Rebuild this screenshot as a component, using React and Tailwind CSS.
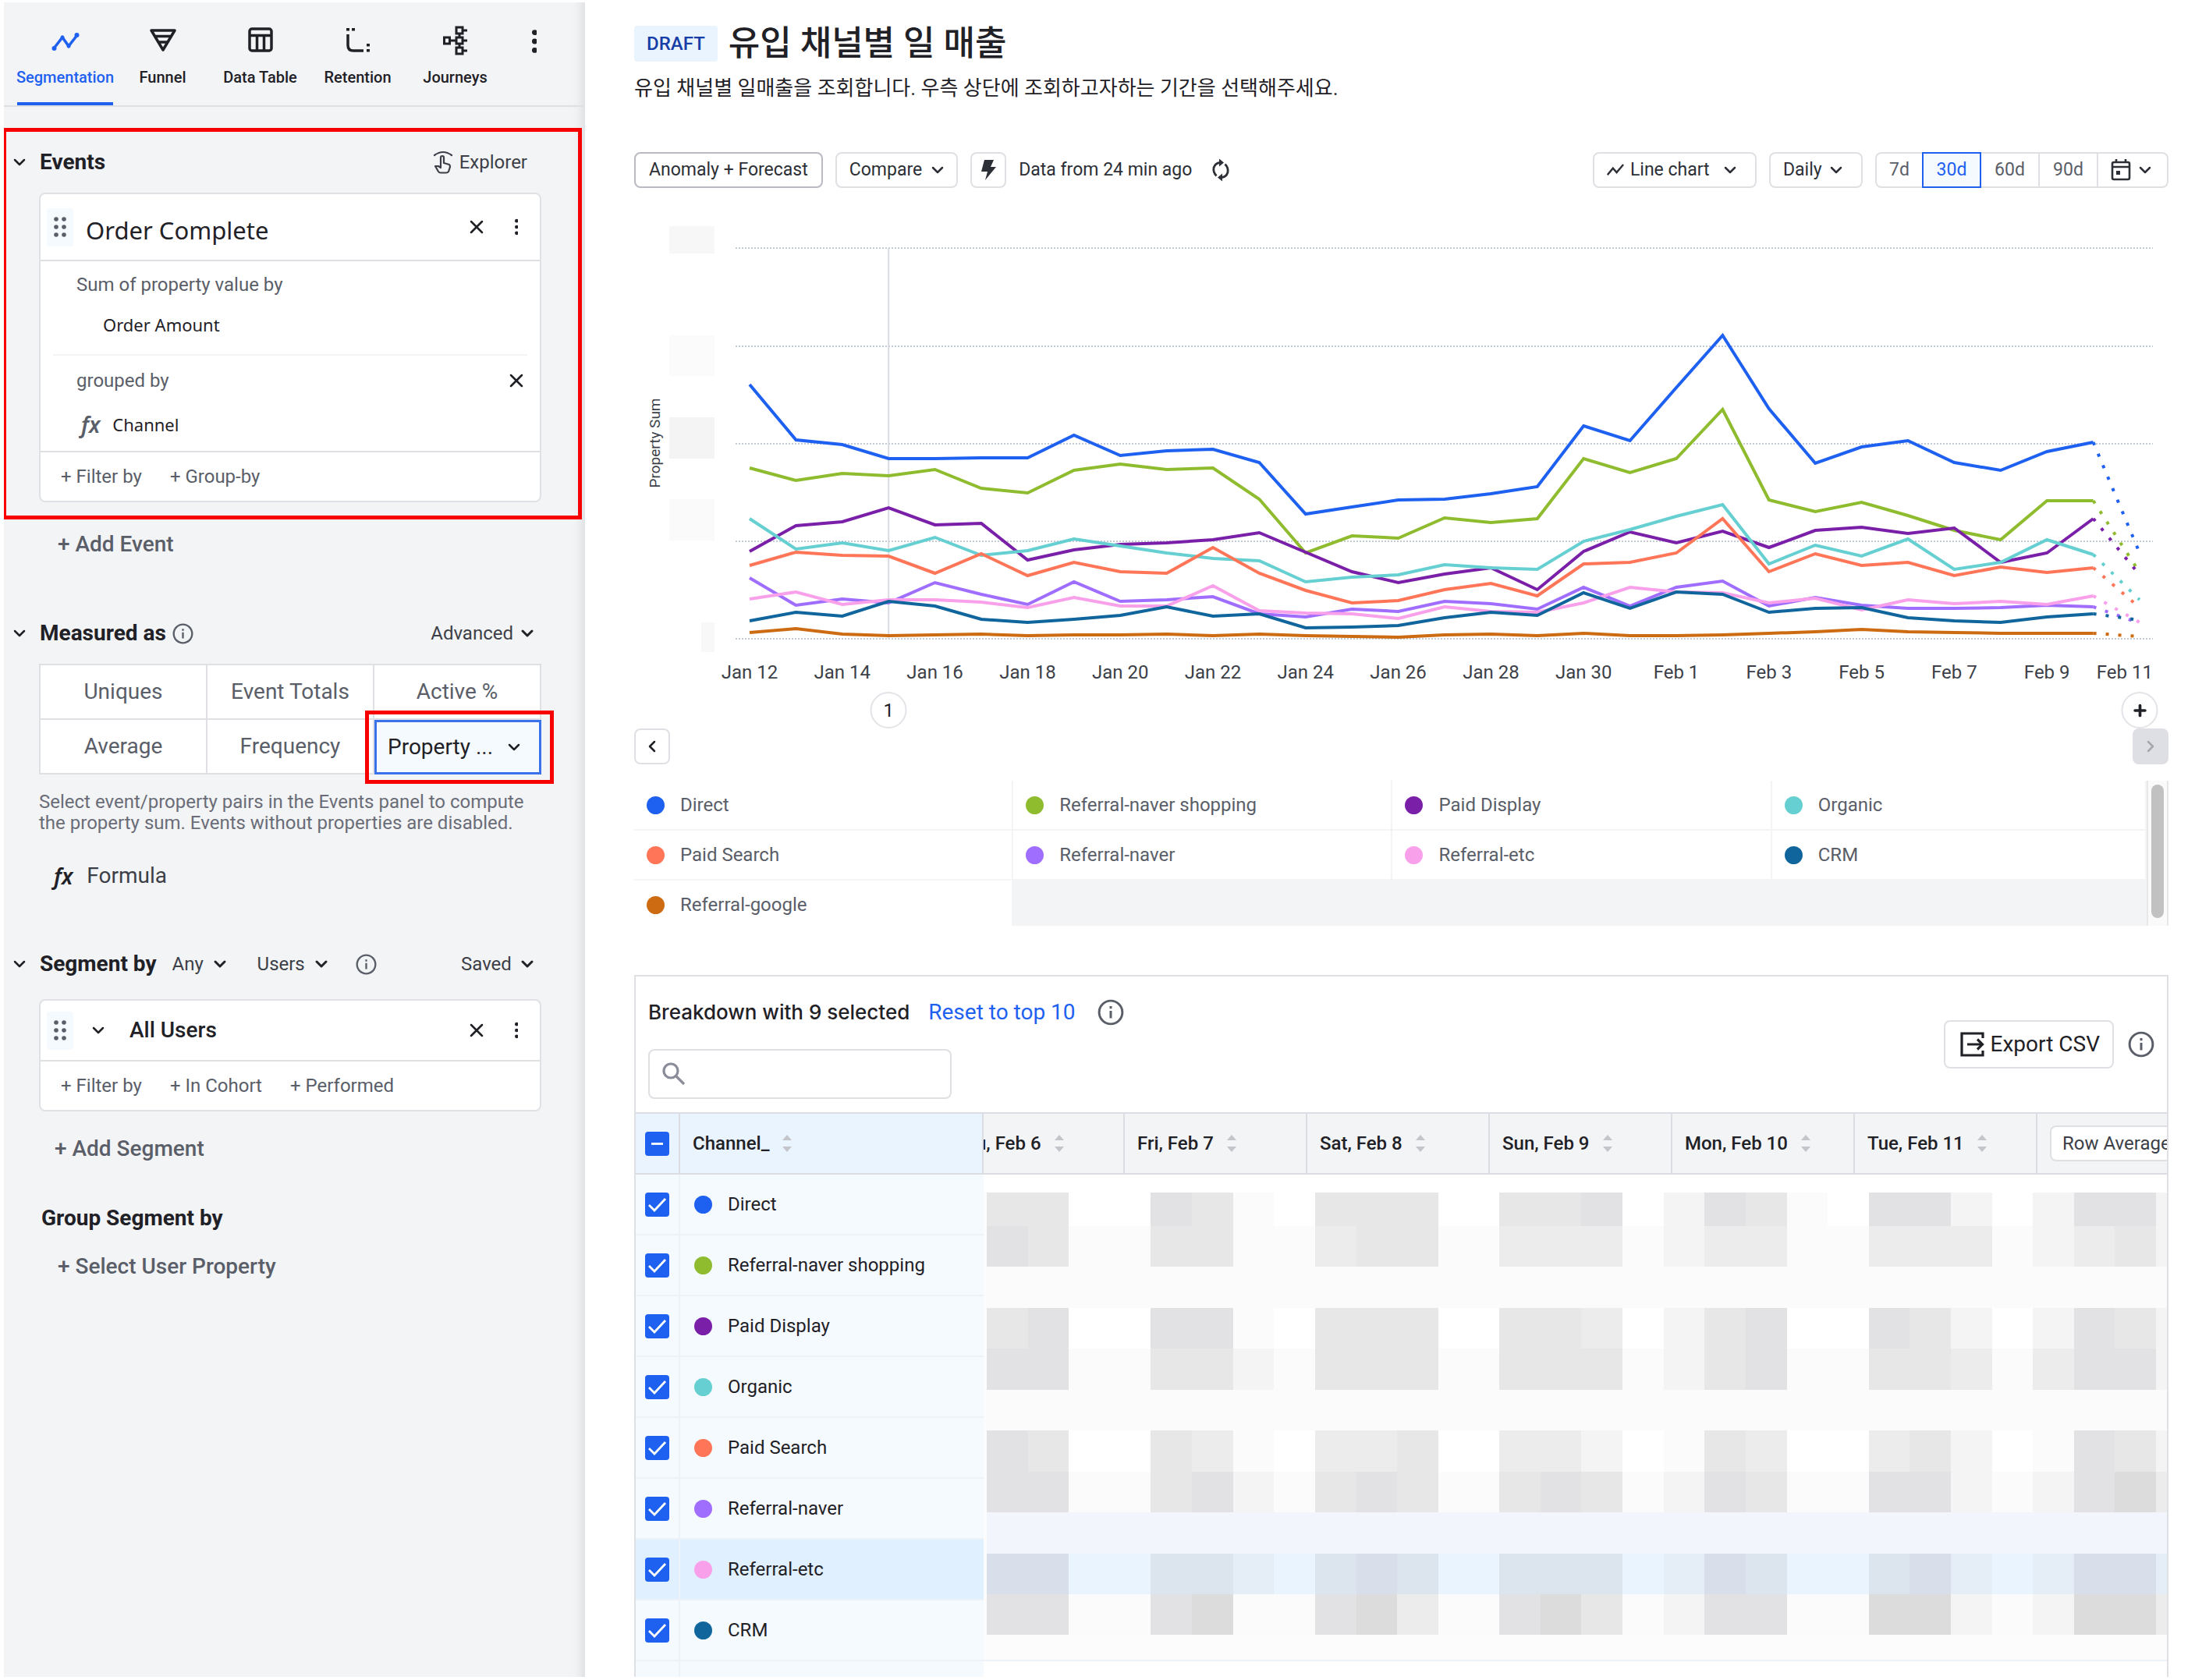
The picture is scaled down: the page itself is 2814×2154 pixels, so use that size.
import { ChevronDown, ChevronLeft, ChevronRight, X, Plus } from 'lucide-react';

const series = [
  { name: 'Direct', color: '#1e61f0', values: [326, 255, 249, 231, 231, 232, 232, 261, 235, 241, 243, 226, 160, 169, 178, 179, 186, 195, 273, 254, 322, 389, 295, 225, 246, 254, 226, 216, 240, 252, 110] },
  { name: 'Referral-naver shopping', color: '#8fbc2f', values: [219, 203, 212, 209, 217, 193, 187, 216, 224, 217, 219, 179, 110, 132, 129, 155, 149, 154, 231, 213, 231, 294, 178, 163, 175, 158, 139, 127, 177, 177, 85] },
  { name: 'Paid Display', color: '#7a1fa8', values: [112, 145, 150, 168, 146, 148, 101, 114, 121, 123, 127, 136, 111, 86, 72, 83, 91, 63, 112, 137, 123, 138, 117, 139, 143, 135, 142, 98, 110, 154, 82] },
  { name: 'Organic', color: '#66cfd1', values: [154, 115, 123, 113, 130, 107, 113, 128, 119, 110, 103, 100, 73, 79, 82, 95, 91, 89, 125, 140, 157, 172, 96, 120, 106, 128, 89, 98, 127, 108, 50] },
  { name: 'Paid Search', color: '#ff7557', values: [94, 111, 107, 106, 84, 109, 81, 98, 86, 84, 117, 84, 62, 46, 49, 63, 71, 55, 96, 98, 110, 154, 86, 109, 94, 98, 81, 92, 85, 91, 40] },
  { name: 'Referral-naver', color: '#a06eff', values: [78, 43, 51, 46, 72, 57, 44, 73, 48, 50, 54, 32, 28, 38, 35, 48, 45, 38, 66, 42, 66, 74, 42, 53, 43, 39, 39, 40, 43, 41, 20] },
  { name: 'Referral-etc', color: '#f9a0ea', values: [51, 60, 44, 50, 50, 47, 40, 53, 42, 42, 68, 36, 33, 32, 26, 41, 35, 34, 46, 66, 60, 59, 46, 52, 37, 50, 45, 48, 44, 55, 21] },
  { name: 'CRM', color: '#10659c', values: [23, 34, 29, 48, 42, 25, 21, 25, 30, 41, 29, 32, 14, 15, 17, 27, 34, 30, 59, 39, 60, 57, 34, 39, 40, 27, 23, 21, 28, 32, 24] },
  { name: 'Referral-google', color: '#cc6b12', values: [8, 13, 6, 4, 5, 6, 4, 5, 5, 6, 4, 6, 4, 3, 2, 5, 6, 4, 7, 4, 4, 5, 7, 9, 12, 9, 8, 7, 7, 7, 3] },
];

const dates = ['Jan 12', 'Jan 14', 'Jan 16', 'Jan 18', 'Jan 20', 'Jan 22', 'Jan 24', 'Jan 26', 'Jan 28', 'Jan 30', 'Feb 1', 'Feb 3', 'Feb 5', 'Feb 7', 'Feb 9'];

const columns = ['Fri, Feb 7', 'Sat, Feb 8', 'Sun, Feb 9', 'Mon, Feb 10', 'Tue, Feb 11'];

// Masked values: one letter per block, see maskColors
const maskRows = [
  'ee..feb.eee.eef.cfeb.ffc.cffc',
  'febbeebbdeebdddbcddbbdddbcdec',
  'bbbbbbbbbbbbbbbbbbbbbbbbbbbbb',
  'ef..ffb.eee.eed.cef..fec.cfec',
  'ffbbeecbeeebeeebcefbbeedbdffc',
  'bbbbbbbbbbbbbbbbbbbbbbbbbbbbb',
  'fe..edb.dde.ddc.bed..dec.bfec',
  'ffbbefcbefebefebcfebbffcbcfgd',
  'lllllllllllllllllllllllllllll',
  'kkhhjjihjkjhjjjhikjhhjkihikki',
  'ffbbfgbbfgdbfgebcffbbggcbcggd',
];

const maskColors = {
  '.': 'bg-white',
  b: 'bg-[#fbfbfb]',
  c: 'bg-[#f4f4f5]',
  d: 'bg-[#ececed]',
  e: 'bg-[#e7e7e8]',
  f: 'bg-[#e2e2e4]',
  g: 'bg-[#dcdcdd]',
  h: 'bg-[#e9f4fe]',
  i: 'bg-[#e5edf7]',
  j: 'bg-[#dce4ee]',
  k: 'bg-[#d8dfea]',
  l: 'bg-[#f2f6fc]',
};

const CHART_W = 1967;
const BASE = 530;
const dayX = (i) => 148 + i * 59.4;

function SegmentationIcon() {
  return (
    <svg viewBox="0 0 36 36" className="size-9" fill="none" stroke="currentColor" strokeWidth="3.5">
      <path d="M3 29 L14 15 L22 26 L33 12" />
      <g fill="currentColor" stroke="none">
        <circle cx="3.5" cy="29" r="3" /><circle cx="14" cy="15" r="2.500" />
        <circle cx="22" cy="26" r="2.500" /><circle cx="32.5" cy="12" r="3" />
      </g>
    </svg>
  );
}

function FunnelIcon() {
  return (
    <svg viewBox="0 0 36 36" className="size-9" fill="none" stroke="currentColor" strokeWidth="3.5">
      <path d="M3 6 H33 L18 31 Z M7 13.5 H29 M11 21 H25" strokeLinejoin="round" />
    </svg>
  );
}

function TableIcon() {
  return (
    <svg viewBox="0 0 36 36" className="size-9" fill="none" stroke="currentColor" strokeWidth="3.5">
      <rect x="4" y="4" width="28" height="28" rx="3" />
      <path d="M4 12.500 H32 M13.5 12.500 V32 M22.5 12.500 V32" />
    </svg>
  );
}

function RetentionIcon() {
  return (
    <svg viewBox="0 0 36 36" className="size-9" fill="none" stroke="currentColor" strokeWidth="3.5">
      <path d="M5 11 V25 Q5 32 12 32 H25" />
      <g fill="currentColor" stroke="none">
        <rect x="3" y="3" width="4" height="3.5" /><rect x="10" y="3" width="4" height="3.5" />
        <rect x="29" y="23" width="4" height="3.5" /><rect x="29" y="30" width="4" height="3.5" />
      </g>
    </svg>
  );
}

function JourneysIcon() {
  return (
    <svg viewBox="0 0 36 38" className="h-[38px] w-9" fill="none" stroke="currentColor" strokeWidth="3">
      <rect x="3.500" y="15" width="7" height="8" />
      <rect x="19" y="2" width="8" height="8" />
      <rect x="19" y="15" width="8" height="8" />
      <rect x="19" y="28" width="8" height="8" />
      <path d="M10.500 19 H19 M23 10 V15 M23 23 V28 M27 6 H33 M27 19 H33 M27 32 H33" />
    </svg>
  );
}

function Dots({ className }) {
  return (
    <svg viewBox="0 0 6 28" className={className} fill="currentColor">
      <circle cx="3" cy="4" r="3" /><circle cx="3" cy="14" r="3" /><circle cx="3" cy="24" r="3" />
    </svg>
  );
}

function Info({ className }) {
  return (
    <svg viewBox="0 0 32 32" className={className} fill="none" stroke="currentColor" strokeWidth="2.800">
      <circle cx="16" cy="16" r="14" />
      <path d="M16 14 V23 M16 8.500 V11.500" />
    </svg>
  );
}

function TouchIcon() {
  return (
    <svg viewBox="0 0 26 30" className="h-[30px] w-[26px]" fill="none" stroke="currentColor" strokeWidth="2.200" strokeLinecap="round" strokeLinejoin="round">
      <path d="M2 6 Q13 -2 24 6" />
      <path d="M7 27 L3 20 L7 20 L10 22 V9 Q10 7 12 7 Q14 7 14 9 V16 L21 18 Q22 19 22 21 L20 27 Q19 28.500 17 28.500 H10 Q8 28.500 7 27 Z" />
    </svg>
  );
}

function TrendIcon() {
  return (
    <svg viewBox="0 0 28 24" className="h-6 w-7" fill="none" stroke="currentColor" strokeWidth="3">
      <path d="M1 20 L10 9 L16 16 L27 3" />
    </svg>
  );
}

function SortIcon() {
  return (
    <svg viewBox="0 0 14 22" className="h-[22px] w-3.5 text-[#c3c5ca]" fill="currentColor">
      <path d="M7 0 L13 7 H1 Z M7 22 L13 15 H1 Z" />
    </svg>
  );
}

function Fx({ className }) {
  return <span className={`font-['Noto_Sans',sans-serif] text-[28px] leading-8 font-semibold italic ${className}`}>fx</span>;
}

function Handle() {
  return (
    <span className="ml-2 grid h-[49px] w-[34px] place-items-center rounded bg-[#f5faff] text-[#5a5e68]">
      <svg viewBox="0 0 16 26" className="h-[26px] w-4" fill="currentColor">
        {[3, 13, 23].map((y) => (
          <g key={y}><circle cx="3" cy={y} r="2.800" /><circle cx="13" cy={y} r="2.800" /></g>
        ))}
      </svg>
    </span>
  );
}

function Dropdown({ label, value, className, icon, chevron = 'right-2.5' }) {
  return (
    <span className={`relative inline-flex items-center ${className}`}>
      {icon}
      <select aria-label={label} defaultValue={value} className="h-full w-full cursor-pointer appearance-none bg-transparent pr-8 outline-none">
        <option>{value}</option>
      </select>
      <ChevronDown className={`pointer-events-none absolute size-6 ${chevron}`} strokeWidth={2.5} />
    </span>
  );
}

function PlainDropdown({ label, value }) {
  return (
    <span className="relative inline-flex items-center text-[#3c3f47]">
      <select aria-label={label} defaultValue={value} className="h-8 cursor-pointer appearance-none bg-transparent pr-8 text-2xl leading-8 outline-none">
        <option>{value}</option>
      </select>
      <ChevronDown className="pointer-events-none absolute right-0 size-6 text-[#1f2126]" strokeWidth={3} />
    </span>
  );
}

function SectionHeader({ title, children }) {
  return (
    <div className="flex h-8 items-center pr-[60px] pl-2">
      <button aria-label={`Collapse ${title}`} className="mr-3.5"><ChevronDown className="size-6" strokeWidth={2.5} /></button>
      <h2 className="text-[28px] leading-8 font-bold">{title}</h2>
      {children}
    </div>
  );
}

function CardActions() {
  return (
    <div className="mr-3 ml-auto flex gap-[15px]">
      <button aria-label="Remove" className="grid size-9 place-items-center"><X className="size-7" strokeWidth={2.2} /></button>
      <button aria-label="More" className="grid size-9 place-items-center"><Dots className="h-[22px]" /></button>
    </div>
  );
}

function Sidebar() {
  const tabs = [
    ['Segmentation', SegmentationIcon],
    ['Funnel', FunnelIcon],
    ['Data Table', TableIcon],
    ['Retention', RetentionIcon],
    ['Journeys', JourneysIcon],
  ];
  const measures = ['Uniques', 'Event Totals', 'Active %', 'Average', 'Frequency'];

  return (
    <aside className="w-[745px] shrink-0 border-r-2 border-[#e3e4e8] bg-[#f3f4f6] shadow-[inset_-16px_0_14px_-14px_rgba(0,0,0,0.1)]">
      <nav className="flex h-[134px] items-stretch gap-0.5 border-b-2 border-[#dfe0e4] pl-[17px]">
        {tabs.map(([name, Icon], i) => (
          <button
            key={name}
            className={`flex w-[123px] flex-col items-center border-b-4 pt-[30px] text-xl leading-8 font-medium ${i === 0 ? 'border-[#1e61f0] text-[#1e61f0]' : 'border-transparent'}`}
          >
            <span className="grid h-[50px] place-items-start"><Icon /></span>
            {name}
          </button>
        ))}
        <button aria-label="More charts" className="mt-8 ml-5 grid size-9 place-items-center"><Dots className="h-8" /></button>
      </nav>

      <section className="relative mt-[27px] pt-7 pb-[22px]">
        <SectionHeader title="Events">
          <button className="mr-3 ml-auto flex items-center gap-2 text-2xl leading-8 text-[#3c3f47]">
            <TouchIcon />
            Explorer
          </button>
        </SectionHeader>

        <div className="mt-[23px] mr-[54px] ml-[45px] rounded-lg border-2 border-[#e0e1e6] bg-white">
          <div className="flex h-[86px] items-center border-b-2 border-[#dfe0e4]">
            <Handle />
            <span className="ml-4 pt-2 font-['Noto_Sans',sans-serif] text-[31px] leading-10">Order Complete</span>
            <CardActions />
          </div>
          <div className="pt-3.5">
            <p className="pl-[46px] text-2xl leading-8 text-[#5a5e68]">Sum of property value by</p>
            <p className="mt-[17px] pl-20 font-['Noto_Sans',sans-serif] text-[22px] leading-9">Order Amount</p>
            <hr className="mx-4 mt-5 border-t-2 border-[#f3f4f6]" />
            <div className="mt-4 flex h-8 items-center pl-[46px] text-2xl leading-8 text-[#5a5e68]">
              grouped by
              <button aria-label="Remove grouping" className="mr-3 ml-auto grid size-9 place-items-center text-[#1f2126]"><X className="size-7" strokeWidth={2.2} /></button>
            </div>
            <div className="mt-[22px] flex h-9 items-center gap-4 pl-[52px]">
              <Fx className="text-[#5a5e68]" />
              <span className="font-['Noto_Sans',sans-serif] text-[22px] leading-9">Channel</span>
            </div>
          </div>
          <div className="mt-4 flex h-16 items-center gap-9 border-t-2 border-[#dfe0e4] pl-[26px] text-2xl text-[#5a5e68]">
            <button>+ Filter by</button>
            <button>+ Group-by</button>
          </div>
        </div>
        <div className="pointer-events-none absolute inset-y-0 right-0.5 -left-0.5 border-[5px] border-[#f60000]" />
      </section>

      <button className="mt-4 ml-[69px] block text-[28px] leading-8 font-medium text-[#5a5e68]">+ Add Event</button>

      <section className="mt-[82px]">
        <SectionHeader title="Measured as">
          <Info className="ml-2 size-[27px] text-[#5a5e68]" />
          <button className="ml-auto flex items-center gap-1.5 text-2xl leading-8 text-[#3c3f47]">
            Advanced
            <ChevronDown className="size-6 text-[#1f2126]" strokeWidth={3} />
          </button>
        </SectionHeader>
        <div className="mt-[23px] mr-[54px] ml-[45px] grid auto-rows-[70px] grid-cols-3 border-t-2 border-l-2 border-[#dfe0e4] text-[28px] text-[#5a5e68]">
          {measures.map((m) => (
            <button key={m} className="border-r-2 border-b-2 border-[#dfe0e4] bg-white">{m}</button>
          ))}
          <div className="relative text-[#1f2126]">
            <Dropdown
              label="Property measure"
              value="Property ..."
              chevron="right-5"
              className="h-full w-full border-[3px] border-[#3a72ee] bg-[#f5faff] pr-1.5 pl-3.5"
            />
            <div className="pointer-events-none absolute -inset-3 -right-4 border-[5px] border-[#f60000]" />
          </div>
        </div>
        <p className="mt-[22px] mr-12 ml-[45px] text-2xl leading-[27px] text-[#6a6d77]">
          Select event/property pairs in the Events panel to compute the property sum. Events without properties are disabled.
        </p>
        <button className="mt-[38px] ml-[64px] flex items-center gap-[18px] text-[28px] leading-8 text-[#3c3f47]">
          <Fx className="text-[#1f2126]" />
          Formula
        </button>
      </section>

      <section className="mt-[81px]">
        <SectionHeader title="Segment by">
          <div className="ml-5 flex flex-1 items-center">
            <PlainDropdown label="Match" value="Any" />
            <span className="w-9" />
            <PlainDropdown label="Unit" value="Users" />
            <Info className="ml-8 size-[27px] text-[#5a5e68]" />
            <span className="ml-auto"><PlainDropdown label="Saved segments" value="Saved" /></span>
          </div>
        </SectionHeader>
        <div className="mt-[29px] mr-[54px] ml-[45px] rounded-lg border-2 border-[#e0e1e6] bg-white">
          <div className="flex h-[78px] items-center border-b-2 border-[#dfe0e4]">
            <Handle />
            <ChevronDown className="mx-5 size-6" strokeWidth={2.5} />
            <span className="ml-2 text-[28px] leading-8 font-medium">All Users</span>
            <CardActions />
          </div>
          <div className="flex h-[62px] items-center gap-9 pl-[26px] text-2xl text-[#5a5e68]">
            <button>+ Filter by</button>
            <button>+ In Cohort</button>
            <button>+ Performed</button>
          </div>
        </div>
        <button className="mt-8 ml-[65px] block text-[28px] leading-8 font-medium text-[#5a5e68]">+ Add Segment</button>
        <h2 className="mt-[57px] ml-12 text-[28px] leading-8 font-bold">Group Segment by</h2>
        <button className="mt-[30px] ml-[69px] block text-[28px] leading-8 font-medium text-[#5a5e68]">+ Select User Property</button>
      </section>
    </aside>
  );
}

function Toolbar() {
  return (
    <div className="mt-16 flex h-[46px] items-stretch gap-4 text-[23px] text-[#2d2f36]">
      <button className="rounded-lg border-2 border-[#b9bac4] px-[17px]">Anomaly + Forecast</button>
      <button className="flex items-center gap-2 rounded-lg border-2 border-[#dfe0e4] pr-3 pl-4">
        Compare
        <ChevronDown className="size-6" strokeWidth={2.5} />
      </button>
      <button aria-label="Run live" className="grid w-[46px] place-items-center rounded-lg border-2 border-[#dfe0e4]">
        <svg viewBox="0 0 22 28" className="h-7" fill="currentColor"><path d="M6 1 H18 L14 10 H21 L7 27 L10 16 H2 Z" /></svg>
      </button>
      <span className="flex items-center">Data from 24 min ago</span>
      <button aria-label="Refresh" className="ml-2">
        <svg viewBox="0 0 26 30" className="h-[30px]" fill="none" stroke="currentColor" strokeWidth="2.800">
          <path d="M7.500 22.500 Q3 18 4 12 Q6 6 12 5.500 M18.500 7.500 Q23 12 22 18 Q20 24 14 24.500" />
          <path d="M11 0.500 L17 5.500 L11 10.500 Z M15 19.500 L9 24.500 L15 29.500 Z" fill="currentColor" stroke="none" />
        </svg>
      </button>
      <Dropdown
        label="Chart type"
        value="Line chart"
        icon={<TrendIcon />}
        chevron="right-5"
        className="ml-auto gap-2 rounded-lg border-2 border-[#dfe0e4] pr-5 pl-4"
      />
      <Dropdown label="Interval" value="Daily" chevron="right-5" className="rounded-lg border-2 border-[#dfe0e4] pr-[18px] pl-4" />
      <div className="flex rounded-lg border-2 border-[#dfe0e4] text-[#5a5e68]">
        <button className="w-[58px]">7d</button>
        <button className="-my-0.5 w-[76px] border-2 border-[#1e61f0] bg-[#f5faff] text-[#1e61f0]">30d</button>
        <button className="w-[75px] border-r-2 border-[#dfe0e4]">60d</button>
        <button className="w-[75px] border-r-2 border-[#dfe0e4]">90d</button>
        <button aria-label="Custom range" className="flex w-[88px] items-center justify-center gap-1.5 text-[#2d2f36]">
          <svg viewBox="0 0 26 28" className="h-7" fill="none" stroke="currentColor" strokeWidth="2.600">
            <rect x="2" y="4" width="22" height="22" rx="2" />
            <path d="M2 10 H24 M7 0 V5 M19 0 V5" />
            <rect x="7" y="15" width="5" height="5" fill="currentColor" stroke="none" />
          </svg>
          <ChevronDown className="size-6" strokeWidth={2.5} />
        </button>
      </div>
    </div>
  );
}

function Chart() {
  const last = 30;
  const masks = [
    [45, 1, 58, 35, '#f7f7f7'],
    [45, 141, 58, 52, '#fbfbfb'],
    [45, 246, 58, 53, '#f4f4f4'],
    [45, 351, 58, 53, '#fafafa'],
    [86, 509, 17, 38, '#f8f8f8'],
  ];
  return (
    <div className="relative mt-12 pb-[45px]">
      <svg viewBox={`0 0 ${CHART_W} 600`} className="w-full" fill="none">
        {masks.map(([x, y, w, h, fill]) => <rect key={y} x={x} y={y} width={w} height={h} fill={fill} />)}
        <text transform="translate(33 279) rotate(-90)" textAnchor="middle" fontSize="19" fill="#3c3f47">Property Sum</text>
        {[29, 155, 280, 405, 530].map((y) => (
          <line key={y} x1="130" x2="1947" y1={y} y2={y} stroke="#c3cbd6" strokeWidth="2" strokeDasharray="2 2" />
        ))}
        <line x1={dayX(3)} x2={dayX(3)} y1="29" y2={BASE} stroke="#d8dae2" strokeWidth="2" />
        {series.map((s) => (
          <g key={s.name} stroke={s.color} strokeWidth="4">
            <polyline points={s.values.slice(0, last).map((v, i) => `${dayX(i)},${BASE - v}`).join(' ')} />
            <line
              x1={dayX(last - 1)} y1={BASE - s.values[last - 1]} x2={dayX(last)} y2={BASE - s.values[last]}
              strokeDasharray="4 12"
            />
          </g>
        ))}
        <g fontSize="24" fill="#3c3f47" textAnchor="middle">
          {dates.map((d, i) => <text key={d} x={dayX(i * 2)} y="581">{d}</text>)}
          <text x="1947" y="581" textAnchor="end">Feb 11</text>
        </g>
      </svg>
      <button
        className="absolute bottom-0 size-[47px] -translate-x-1/2 rounded-full border-2 border-[#e3e4e8] bg-white text-2xl"
        style={{ left: `${(dayX(3) / CHART_W) * 100}%` }}
      >
        1
      </button>
      <button
        aria-label="Add annotation"
        className="absolute bottom-0 grid size-[47px] -translate-x-1/2 place-items-center rounded-full border-2 border-[#e3e4e8] bg-white"
        style={{ left: `${(dayX(30) / CHART_W) * 100}%` }}
      >
        <Plus className="size-[22px]" strokeWidth={4} />
      </button>
    </div>
  );
}

function Legend() {
  return (
    <div className="mt-[21px] flex h-[186px]">
      <ul className="grid flex-1 auto-rows-[64px] grid-cols-[487fr_487fr_487fr_481fr] overflow-hidden bg-[#f3f4f6] text-2xl text-[#5a5e68]">
        {series.map((s) => (
          <li key={s.name} className="flex items-center gap-5 border-r-2 border-b-2 border-[#f3f4f6] bg-white pl-4">
            <span className="size-[23px] rounded-full" style={{ background: s.color }} />
            {s.name}
          </li>
        ))}
      </ul>
      <div className="w-7 border-x-2 border-[#e8e8e8] bg-[#fafafa] px-1 pt-[5px]">
        <div className="h-[171px] rounded-full bg-[#c1c1c1]" />
      </div>
    </div>
  );
}

function Check({ label, partial }) {
  return (
    <span className="mx-auto grid size-[31px]">
      <input type="checkbox" aria-label={label} defaultChecked className="size-[31px] appearance-none rounded bg-[#1e61f0] [grid-area:1/1]" />
      <svg viewBox="0 0 31 31" className="pointer-events-none size-[31px] [grid-area:1/1]" fill="none" stroke="#fff" strokeWidth="2.800">
        <path d={partial ? 'M8 15.500 H23' : 'M5 16 L12 23 L26 8'} />
      </svg>
    </span>
  );
}

function Breakdown() {
  return (
    <section className="mt-[63px] border-2 border-b-0 border-[#dfe0e4]">
      <div className="flex items-center pr-4 pl-4">
        <div className="pt-[30px] pb-[17px]">
          <div className="flex h-8 items-center">
            <h2 className="font-['Inter',sans-serif] text-[26px] leading-8 font-medium">Breakdown with 9 selected</h2>
            <a href="#reset" className="ml-6 text-[28px] leading-8 text-[#1e61f0]">Reset to top 10</a>
            <Info className="ml-7 size-[34px] text-[#5a5e68]" />
          </div>
          <label className="mt-[31px] flex h-16 w-[389px] items-center rounded-lg border-2 border-[#dfe0e4] px-4">
            <svg viewBox="0 0 30 30" className="size-[30px] shrink-0 text-[#8a8d99]" fill="none" stroke="currentColor" strokeWidth="3.200">
              <circle cx="11" cy="11" r="9" /><path d="M17.500 17.500 L28 28" />
            </svg>
            <input type="search" aria-label="Search breakdown" className="ml-3 w-full text-2xl outline-none" />
          </label>
        </div>
        <button className="ml-auto flex h-[62px] items-center gap-2 rounded-lg border-2 border-[#dfe0e4] pr-4 pl-[18px] text-[28px]">
          <svg viewBox="0 0 32 34" className="h-[34px] w-8" fill="none" stroke="currentColor" strokeWidth="3.200">
            <path d="M30 9 V3 H3 V31 H30 V25 M10 17 H29" /><path d="M23 10.500 L29.500 17 L23 23.500" />
          </svg>
          Export CSV
        </button>
        <Info className="ml-[18px] size-[34px] text-[#5a5e68]" />
      </div>

      <table className="w-full table-fixed border-separate border-spacing-0 text-2xl">
        <colgroup>
          <col className="w-[57px]" />
          <col className="w-[389px]" />
          <col className="w-[181px]" />
          {columns.map((c) => <col key={c} className="w-[234px]" />)}
          <col />
        </colgroup>
        <thead>
          <tr className="h-20 text-left *:border-y-2 *:border-[#dcdde2] *:p-0 *:font-medium">
            <th className="border-r-2 bg-[#eaf4ff]"><Check label="Select all" partial /></th>
            <th className="border-r-2 bg-[#eaf4ff]">
              <span className="flex items-center gap-4 pl-4">Channel_ <SortIcon /></span>
            </th>
            <th className="border-r-2 bg-[#f3f4f6]">
              <span className="flex justify-end overflow-hidden">
                <span className="flex w-[234px] shrink-0 items-center gap-4 pl-[17px]">Thu, Feb 6 <SortIcon /></span>
              </span>
            </th>
            {columns.map((c) => (
              <th key={c} className="border-r-2 bg-[#f3f4f6]">
                <span className="flex items-center gap-4 pl-4">{c} <SortIcon /></span>
              </th>
            ))}
            <th className="overflow-hidden bg-[#f3f4f6] pl-4!">
              <button className="h-[46px] w-[200px] rounded-lg border-2 border-[#dfe0e4] bg-white pl-3.5 text-left font-normal text-[#3c3f47]">Row Average</button>
            </th>
          </tr>
        </thead>
        <tbody>
          {series.map((s, i) => {
            const active = s.name === 'Referral-etc';
            return (
              <tr key={s.name} className={`h-[78px] *:border-b-2 *:border-[#edf2f8] *:p-0 ${active ? 'bg-[#e0f0ff]' : 'bg-[#f5faff]'}`}>
                <td className="border-r-2"><Check label={s.name} /></td>
                <td>
                  <span className="flex items-center gap-5 pl-[18px]">
                    <span className="size-[23px] rounded-full" style={{ background: s.color }} />
                    {s.name}
                  </span>
                </td>
                {i === 0 && (
                  <td rowSpan={8} colSpan={7} className="bg-[#fcfcfc] align-top">
                    <div className="h-[23px] bg-white" />
                    <div className="ml-1 grid grid-cols-[repeat(11,53fr)_79fr_repeat(16,53fr)_14fr] grid-rows-[43px_52px_53px_52px_53px_52px_53px_52px_53px_52px_52px]">
                      {maskRows.join('').split('').map((c, n) => <span key={n} className={maskColors[c]} />)}
                    </div>
                  </td>
                )}
                {i === 8 && <td colSpan={7} className="bg-white" />}
              </tr>
            );
          })}
        </tbody>
      </table>
    </section>
  );
}

export default function App() {
  return (
    <div className="h-screen bg-white pt-[3px] pb-1 pl-[5px] font-['Roboto','Noto_Sans_CJK_KR',sans-serif] text-[#1f2126]">
      <div className="flex h-full overflow-hidden">
        <Sidebar />
        <main className="min-w-0 flex-1 pt-[30px] pr-[34px] pl-[63px]">
          <div className="flex h-[46px] items-center gap-3.5">
            <span className="flex h-[46px] items-center rounded bg-[#eaf4ff] px-4 text-2xl font-medium text-[#173da6]">DRAFT</span>
            <h1 className="text-[44px] leading-[46px] font-medium">유입 채널별 일 매출</h1>
          </div>
          <p className="mt-4 text-[26px] leading-9">
            유입 채널별 일매출을 조회합니다. 우측 상단에 조회하고자하는 기간을 선택해주세요.
          </p>
          <Toolbar />
          <Chart />
          <div className="flex justify-between">
            <button aria-label="Previous period" className="grid size-[46px] place-items-center rounded-lg border-2 border-[#dfe0e4]">
              <ChevronLeft className="size-6" strokeWidth={2.5} />
            </button>
            <button aria-label="Next period" disabled className="grid size-[46px] place-items-center rounded-lg bg-[#dddfe4] text-[#a5a7ad]">
              <ChevronRight className="size-6" strokeWidth={2.5} />
            </button>
          </div>
          <Legend />
          <Breakdown />
        </main>
      </div>
    </div>
  );
}
